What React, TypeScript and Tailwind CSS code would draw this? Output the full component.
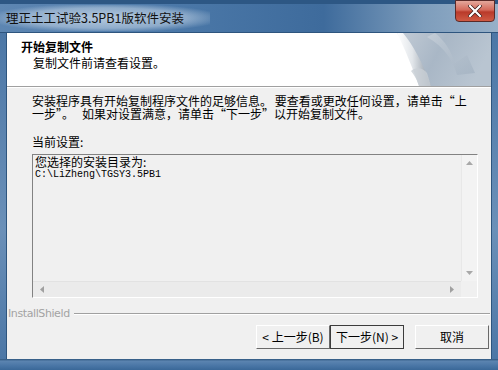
import React from "react";

const cjk = { fontFamily: '"Noto Sans CJK SC", "Noto Sans", sans-serif' };
const mono = { fontFamily: '"Liberation Mono", "Noto Sans CJK SC", monospace' };

function Curl() {
  return (
    <svg width="94" height="53" viewBox="0 0 94 53">
      <defs>
        <linearGradient id="bg" x1="0" y1="0" x2="1" y2="0.3">
          <stop offset="0" stopColor="#c3ccd6" />
          <stop offset="0.5" stopColor="#a9b7c6" />
          <stop offset="1" stopColor="#b9c5d1" />
        </linearGradient>
        <linearGradient id="curl" x1="0" y1="0" x2="1" y2="0">
          <stop offset="0" stopColor="#ffffff" />
          <stop offset="0.45" stopColor="#e2e6ea" />
          <stop offset="1" stopColor="#8d98a4" />
        </linearGradient>
        <linearGradient id="arr" x1="0" y1="0" x2="1" y2="1">
          <stop offset="0" stopColor="#d3dae1" />
          <stop offset="1" stopColor="#9aaabb" />
        </linearGradient>
      </defs>
      <path d="M0 0 L94 0 L94 53 L26 53 C20 36 10 14 0 0 Z" fill="url(#bg)" />
      <path d="M38 0 C48 8 54 18 58 30 L70 22 L78 40 L60 42 C56 28 48 14 30 4 Z" fill="url(#arr)" opacity="0.55" />
      <path d="M0 0 L6 0 C16 12 26 30 34 53 L22 53 C16 36 8 16 0 0 Z" fill="url(#curl)" />
      <path d="M14 38 C18 34 26 34 30 40 L34 53 L22 53 C20 46 17 42 14 38 Z" fill="#c9cfd6" opacity="0.8" />
    </svg>
  );
}

function Btn({ children, def }: { children: React.ReactNode; def?: boolean }) {
  return (
    <div
      className={
        "h-[24px] flex items-center justify-center bg-[#f0f0f0] text-[12px] text-black leading-none whitespace-pre " +
        (def
          ? "border border-[#3c3c3c] w-[74px]"
          : "border border-t-white border-l-white border-r-[#696969] border-b-[#696969] w-[74px]")
      }
      style={cjk}
    >
      {children}
    </div>
  );
}

export default function App() {
  return (
    <div className="w-[498px] h-[370px] flex flex-col overflow-hidden bg-[#4f7aa8]">
      {/* title bar */}
      <div className="relative h-[33px] shrink-0 bg-[linear-gradient(90deg,#5d86b2_0%,#4b78a8_35%,#3e6b9c_65%,#7e9dbc_85%,#97b0c8_100%)] border-t-[4px] border-t-[#2d5784]">
        <div className="absolute left-0 top-[1px] h-[26px] w-[210px] bg-[radial-gradient(ellipse_at_center,rgba(205,220,235,0.8)_0%,rgba(205,220,235,0.5)_55%,rgba(205,220,235,0)_80%)]" />
        <div className="relative pl-[6px] pt-[7px] text-[12.5px] leading-[14px] text-[#111]" style={cjk}>
          理正土工试验3.5PB1版软件安装
        </div>
        <div className="absolute right-[3px] top-[-4px] w-[40px] h-[22px] rounded-b-[4px] border border-[#5a2a28] bg-[linear-gradient(180deg,#e4a89c_0%,#d4695a_45%,#b93a2a_55%,#cf5a44_100%)] flex items-center justify-center">
          <svg width="14" height="12" viewBox="0 0 14 12">
            <path d="M2 1 L12 11 M12 1 L2 11" stroke="#3a1a18" strokeWidth="3.6" strokeLinecap="square" />
            <path d="M2 1 L12 11 M12 1 L2 11" stroke="#ffffff" strokeWidth="2.2" strokeLinecap="square" />
          </svg>
        </div>
        <div className="absolute left-0 right-0 bottom-0 h-[1px] bg-[#2e557e]" />
      </div>

      {/* middle with side frames */}
      <div className="flex flex-1 min-h-0 px-[6px] bg-[linear-gradient(180deg,#4c77a6,#6b90b8_60%,#4c77a6)]">
        <div className="flex-1 flex flex-col border-l border-[#2e557e] border-r bg-[#f0f0f0]">
          {/* header */}
          <div className="h-[53px] shrink-0 flex bg-white">
            <div className="flex-1 pl-[14px] pt-[7px]" style={cjk}>
              <div className="text-[12px] leading-[14px] font-bold text-black">开始复制文件</div>
              <div className="text-[12px] leading-[14px] text-black pl-[12px] mt-[2px]">复制文件前请查看设置。</div>
            </div>
            <Curl />
          </div>
          <div className="h-[1px] bg-[#a0a0a0]" />
          <div className="h-[1px] bg-white" />

          {/* body */}
          <div className="flex-1 flex flex-col pl-[25px] pr-[13px] pt-[6px]" style={cjk}>
            <div className="text-[12px] leading-[13px] text-black whitespace-pre">
              {"安装程序具有开始复制程序文件的足够信息。 要查看或更改任何设置，请单击“上\n一步”。   如果对设置满意，请单击“下一步”以开始复制文件。"}
            </div>
            <div className="text-[12px] leading-[13px] text-black mt-[15px]">当前设置:</div>
            <div className="mt-[6px] h-[144px] flex flex-col border border-t-[#828282] border-l-[#828282] border-r-white border-b-white">
              <div className="flex-1 flex min-h-0">
                <div className="flex-1 pl-[2px] pt-[1px]">
                  <div className="text-[12px] leading-[12px] text-black">您选择的安装目录为:</div>
                  <div className="text-[10px] leading-[11px] text-black mt-[1px]" style={mono}>C:\LiZheng\TGSY3.5PB1</div>
                </div>
                <div className="w-[16px] flex flex-col justify-between items-center bg-[#f3f3f3] border-l border-[#e8e8e8] py-[6px]">
                  <svg width="7" height="4" viewBox="0 0 7 4"><path d="M0 4 L3.5 0 L7 4 Z" fill="#a8a8a8" /></svg>
                  <svg width="7" height="4" viewBox="0 0 7 4"><path d="M0 0 L3.5 4 L7 0 Z" fill="#a8a8a8" /></svg>
                </div>
              </div>
              <div className="h-[16px] flex">
                <div className="flex-1 flex items-center justify-between px-[7px] bg-[#ebebeb] border-t border-[#e2e2e2]">
                  <svg width="4" height="7" viewBox="0 0 4 7"><path d="M4 0 L0 3.5 L4 7 Z" fill="#a0a0a0" /></svg>
                  <svg width="4" height="7" viewBox="0 0 4 7"><path d="M0 0 L4 3.5 L0 7 Z" fill="#a0a0a0" /></svg>
                </div>
                <div className="w-[16px] bg-[#f0f0f0]" />
              </div>
            </div>
          </div>

          {/* installshield line */}
          <div className="flex items-center pl-[1px] pr-[1px] mt-[9px]">
            <span className="text-[11px] leading-[12px] text-[#a3a3a3]" style={{ fontFamily: '"DejaVu Sans", "Liberation Sans", sans-serif', letterSpacing: "-0.4px" }}>InstallShield</span>
            <div className="flex-1 ml-[4px] flex flex-col">
              <div className="h-[1px] bg-[#a0a0a0]" />
              <div className="h-[1px] bg-white" />
            </div>
          </div>

          {/* buttons */}
          <div className="flex justify-end items-center pr-[2px] pt-[5px] pb-[10px]">
            <Btn>{"< 上一步(B)"}</Btn>
            <Btn def>{"下一步(N) >"}</Btn>
            <div className="w-[11px]" />
            <Btn>取消</Btn>
          </div>
        </div>
      </div>

      {/* bottom frame */}
      <div className="h-[11px] shrink-0 bg-[linear-gradient(180deg,#2e557e_0%,#5b84b0_20%,#4a76a6_60%,#3a6898_100%)]" />
    </div>
  );
}
